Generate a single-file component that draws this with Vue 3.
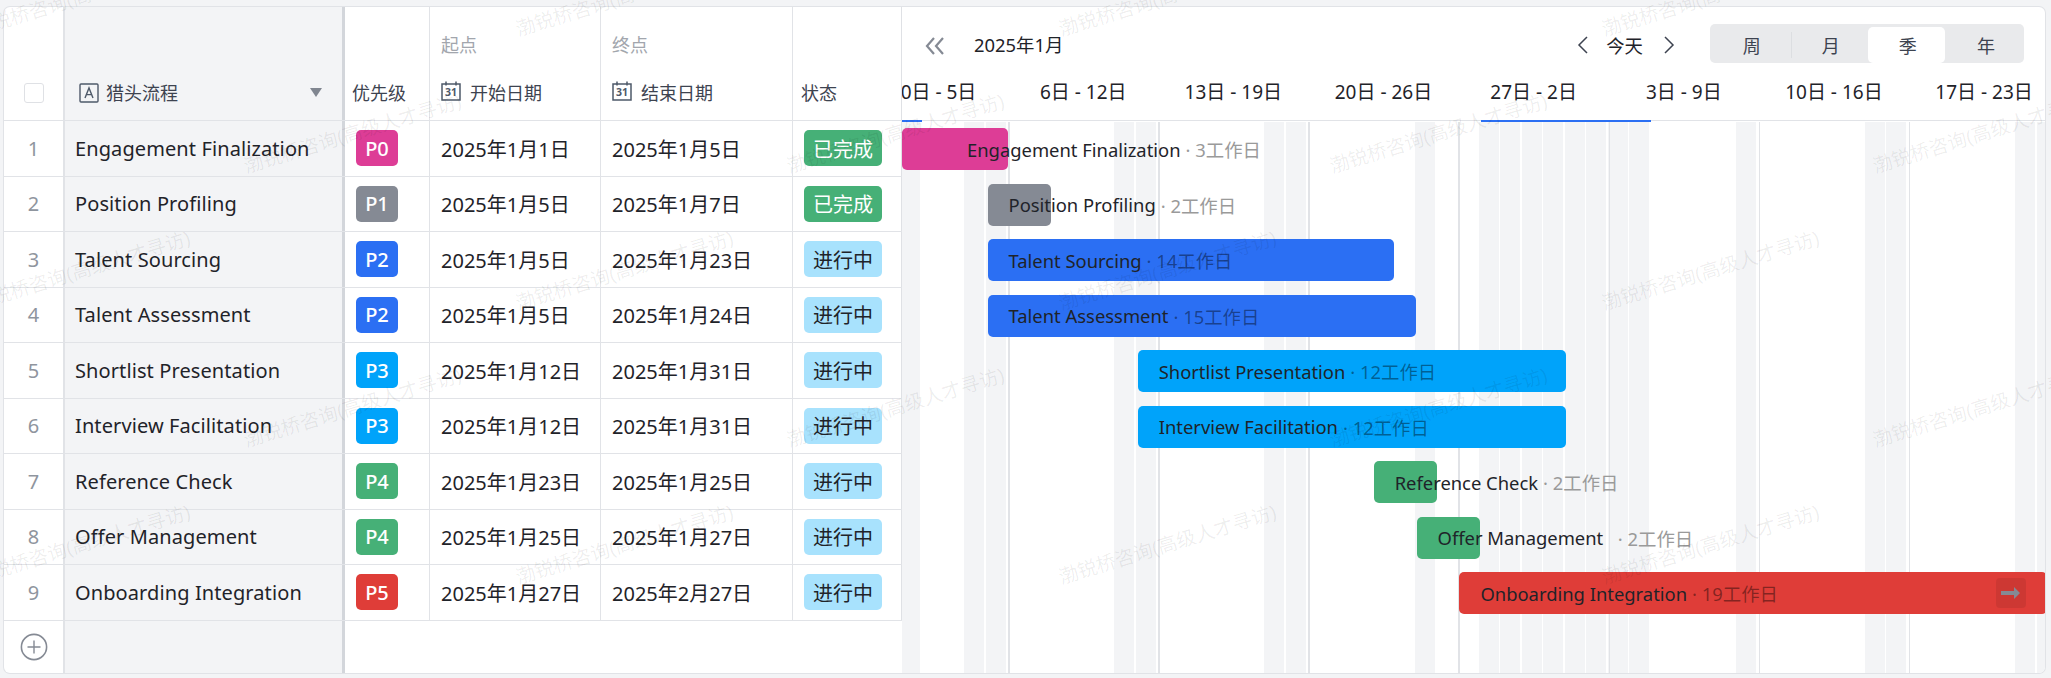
<template>
  <div class="page">
    <div class="card">
      <div class="table">
        <div class="row head">
          <div class="c seq"><span class="check"></span></div>
          <div class="c name">
            <svg class="ico" width="20" height="20" viewBox="0 0 20 20"><rect x="1" y="1" width="18" height="18" rx="1" fill="none" stroke="#4e5969" stroke-width="1.4"/><path d="M6 15l4-10 4 10M7.4 11.6h5.2" fill="none" stroke="#4e5969" stroke-width="1.4"/></svg>
            <span>猎头流程</span>
            <i class="tri"></i>
          </div>
          <div class="c pri">优先级</div>
          <div class="c start">
            <span class="over">起点</span>
            <span class="lab"><svg class="ico" width="20" height="20" viewBox="0 0 20 20"><path d="M1 3h18v16H1zM5 0.5v4M15 0.5v4" fill="none" stroke="#4e5969" stroke-width="1.5"/><text x="10" y="15.2" text-anchor="middle" font-size="10.5" font-weight="700" fill="#4e5969">31</text></svg>开始日期</span>
          </div>
          <div class="c end">
            <span class="over">终点</span>
            <span class="lab"><svg class="ico" width="20" height="20" viewBox="0 0 20 20"><path d="M1 3h18v16H1zM5 0.5v4M15 0.5v4" fill="none" stroke="#4e5969" stroke-width="1.5"/><text x="10" y="15.2" text-anchor="middle" font-size="10.5" font-weight="700" fill="#4e5969">31</text></svg>结束日期</span>
          </div>
          <div class="c status">状态</div>
        </div>
        <div v-for="(t, i) in tasks" :key="t.name" class="row body">
          <div class="c seq num">{{ i + 1 }}</div>
          <div class="c name">{{ t.name }}</div>
          <div class="c pri"><span class="badge" :class="t.pri.toLowerCase()">{{ t.pri }}</span></div>
          <div class="c start">{{ t.from }}</div>
          <div class="c end">{{ t.to }}</div>
          <div class="c status"><span class="state" :class="{ done: t.state === '已完成' }">{{ t.state }}</span></div>
        </div>
        <div class="row foot">
          <div class="c seq">
            <svg width="28" height="28" viewBox="0 0 28 28"><circle cx="14" cy="14" r="12.6" fill="none" stroke="#858a94" stroke-width="1.6"/><path d="M14 7.5v13M7.5 14h13" stroke="#858a94" stroke-width="1.4"/></svg>
          </div>
          <div class="c name"></div>
        </div>
      </div>

      <div class="gantt">
        <div class="g-head">
          <div class="tools">
            <svg class="dbl" width="20" height="18" viewBox="0 0 20 18"><path d="M9 1L2 9l7 8M18 1l-7 8 7 8" fill="none" stroke="#858a94" stroke-width="2.2"/></svg>
            <span class="month">2025年1月</span>
            <svg class="prev" width="12" height="20" viewBox="0 0 12 20"><path d="M10 2L2 10l8 8" fill="none" stroke="#3d4350" stroke-width="1.5"/></svg>
            <span class="today">今天</span>
            <svg class="next" width="12" height="20" viewBox="0 0 12 20"><path d="M2 2l8 8-8 8" fill="none" stroke="#3d4350" stroke-width="1.5"/></svg>
            <div class="seg">
              <span v-for="s in scales" :key="s" :class="{ on: s === '季' }">{{ s }}</span>
            </div>
          </div>
          <div class="weeks">
            <span v-for="w in weeks" :key="w">{{ w }}</span>
          </div>
          <i class="mark" :style="{ left: '0px', width: '20px' }"></i>
          <i class="mark" :style="{ left: '579px', width: '170px' }"></i>
        </div>
        <div class="g-body">
          <i v-for="d in offDays" :key="d" class="stripe" :style="{ left: dayX(d) - 1 + 'px' }"></i>
          <i v-for="n in 7" :key="n" class="line" :style="{ left: dayX(6 + (n - 1) * 7) + 'px' }"></i>
          <div v-for="t in tasks" :key="t.name" class="g-row">
            <div class="bar" :class="t.pri.toLowerCase()" :style="barStyle(t)">
              <span class="b-name">{{ t.name }}</span>
              <span class="b-days">{{ t.gap ? '&nbsp;' : '' }} · {{ t.days }}工作日</span>
              <span v-if="t.more" class="more">
                <svg width="20" height="14" viewBox="0 0 20 14"><path d="M0 5h13V1l6 6-6 6V9H0z" fill="#858a94"/></svg>
              </span>
            </div>
          </div>
        </div>
      </div>

      <span v-for="(m, i) in marks" :key="i" class="wm" :style="{ left: m.x + 'px', top: m.y + 'px' }">渤锐桥咨询(高级人才寻访)</span>
    </div>
  </div>
</template>

<script setup>
const scales = ['周', '月', '季', '年']
const weeks = ['30日 - 5日', '6日 - 12日', '13日 - 19日', '20日 - 26日', '27日 - 2日', '3日 - 9日', '10日 - 16日', '17日 - 23日']
const tasks = [
  { name: 'Engagement Finalization', pri: 'P0', from: '2025年1月1日', to: '2025年1月5日', state: '已完成', s: 1, e: 5, days: 3, pad: 65 },
  { name: 'Position Profiling', pri: 'P1', from: '2025年1月5日', to: '2025年1月7日', state: '已完成', s: 5, e: 7, days: 2 },
  { name: 'Talent Sourcing', pri: 'P2', from: '2025年1月5日', to: '2025年1月23日', state: '进行中', s: 5, e: 23, days: 14 },
  { name: 'Talent Assessment', pri: 'P2', from: '2025年1月5日', to: '2025年1月24日', state: '进行中', s: 5, e: 24, days: 15 },
  { name: 'Shortlist Presentation', pri: 'P3', from: '2025年1月12日', to: '2025年1月31日', state: '进行中', s: 12, e: 31, days: 12 },
  { name: 'Interview Facilitation', pri: 'P3', from: '2025年1月12日', to: '2025年1月31日', state: '进行中', s: 12, e: 31, days: 12 },
  { name: 'Reference Check', pri: 'P4', from: '2025年1月23日', to: '2025年1月25日', state: '进行中', s: 23, e: 25, days: 2 },
  { name: 'Offer Management', pri: 'P4', from: '2025年1月25日', to: '2025年1月27日', state: '进行中', s: 25, e: 27, days: 2, gap: true },
  { name: 'Onboarding Integration', pri: 'P5', from: '2025年1月27日', to: '2025年2月27日', state: '进行中', s: 27, e: 58, days: 19, more: true }
]
// days counted from Jan 1; Feb n = 31 + n
const offDays = [1, 4, 5, 11, 12, 18, 19, 25, 28, 29, 30, 31, 32, 33, 34, 35, 40, 46, 47, 53, 54]
const DAY = 21.45
const dayX = (n) => 106 + (n - 6) * DAY

function barStyle(t) {
  const left = t.s === 1 ? 0 : dayX(t.s) + 1
  const right = Math.min(dayX(t.e + 1), 1145)
  return {
    marginLeft: left + 'px',
    width: right - left + 'px',
    paddingLeft: (t.pad || 21) + 'px'
  }
}

// watermark tile: 543 x 137, every other row shifted
const marks = []
for (let r = 0; r < 5; r++) {
  for (let n = 0; n < 5; n++) {
    marks.push({ x: (r % 2 ? 244 : -27) + n * 543, y: 8 + r * 137 })
  }
}
</script>

<style>
html, body { background: #f3f4f6; }
</style>
<style scoped>
.page { box-sizing: border-box; height: 678px; padding: 7px 6px 5px 4px; overflow: hidden; position: relative; font-family: "Noto Sans", "Noto Sans CJK SC", sans-serif; color: #1f2329; }
.card { position: relative; box-sizing: border-box; height: 666px; display: flex; background: #fff; border-radius: 6px; box-shadow: 0 0 0 1px #e1e3e7; }
.table { width: 898px; flex: none; display: flex; flex-direction: column; }
.row { display: flex; flex: none; }
.head { height: 114px; border-bottom: 1.5px solid #e1e3e7; box-sizing: border-box; font-size: 18px; color: #3d4350; }
.body { height: 55.5px; box-sizing: border-box; border-bottom: 1.5px solid #e1e3e7; font-size: 20px; }
.body .name { letter-spacing: 0.1px; }
.foot { flex: 1; }
.c { box-sizing: border-box; display: flex; align-items: center; border-right: 1.5px solid #e1e3e7; }
.seq { width: 60px; justify-content: center; }
.name { width: 281px; padding-left: 10px; background: #f3f4f6; border-right: 3px solid #d3d6db; border-left: 1.5px solid #e1e3e7; }
.pri { width: 85px; padding-left: 11px; }
.start { width: 171px; padding-left: 11px; }
.end { width: 192px; padding-left: 11px; }
.status { width: 109px; padding-left: 11px; border-right: 1.5px solid #dfe1e5; }
.head .c { align-items: flex-end; padding-bottom: 15px; }
.head .pri { padding-left: 7px; }
.head .status { padding-left: 8px; }
.head .start, .head .end { flex-direction: column; align-items: flex-start; justify-content: flex-end; }
.over { color: #a2a6ad; margin-bottom: 22px; }
.lab { display: flex; align-items: center; gap: 9px; }
.ico { flex: none; margin-bottom: 2px; }
.head .name { gap: 7px; padding-left: 14px; }
.tri { margin-left: auto; margin-right: 20px; margin-bottom: 8px; border-left: 6px solid transparent; border-right: 6px solid transparent; border-top: 9px solid #808690; }
.check { width: 20px; height: 20px; box-sizing: border-box; border: 1.5px solid #dfe1e5; border-radius: 3px; margin-bottom: 2px; }
.num { color: #8f959e; font-size: 20px; }
.badge { width: 42px; height: 36px; border-radius: 5px; color: #fff; font-size: 20px; font-weight: 500; display: flex; align-items: center; justify-content: center; }
.p0 { background: #dd3d96; }
.p1 { background: #858a94; }
.p2 { background: #2b6ff3; }
.p3 { background: #00a3fa; }
.p4 { background: #46b077; }
.p5 { background: #df3d38; }
.state { width: 78px; height: 36px; border-radius: 5px; background: #a8e2fd; font-size: 20px; display: flex; align-items: center; justify-content: center; }
.state.done { background: #46b077; color: #fff; }

.gantt { flex: 1; min-width: 0; display: flex; flex-direction: column; overflow: hidden; border-radius: 0 6px 6px 0; }
.g-head { position: relative; height: 114px; flex: none; box-sizing: border-box; border-bottom: 1.5px solid #e1e3e7; }
.tools { height: 68px; display: flex; align-items: center; padding-top: 6px; box-sizing: border-box; font-size: 18.4px; }
.dbl { margin-left: 23px; margin-top: 3px; }
.month { margin-left: 29px; }
.prev { margin-left: auto; margin-top: 1px; }
.today { margin: 1px 21px 0 17px; }
.next { margin-top: 1px; margin-left: -1px; }
.seg { margin-left: 35px; margin-right: 21px; margin-top: -2px; width: 314px; flex: none; height: 39px; background: #e9eaec; border-radius: 5px; display: grid; grid-template-columns: repeat(3, 78.5px) 75px; padding: 3px 0 3px 3px; box-sizing: border-box; }
.seg span { display: flex; align-items: center; justify-content: center; border-radius: 5px; font-size: 18px; color: #3d4350; }
.seg span:first-child { border-radius: 0; border-right: 1px solid #dcdee1; margin: 5px 0; }
.seg .on { background: #fff; margin: 0 4px 0 -2px; padding-left: 3px; }
.weeks { display: flex; margin-left: -44px; margin-top: 2px; font-size: 19px; color: #1f2329; white-space: nowrap; }
.weeks span { width: 150.15px; flex: none; text-align: center; }
.mark { position: absolute; bottom: -1.5px; height: 2px; background: #2b6ff3; }
.g-body { position: relative; flex: 1; padding-top: 7px; overflow: hidden; }
.stripe { position: absolute; top: 1px; bottom: 0; width: 20px; background: #f3f4f6; }
.line { position: absolute; top: 1px; bottom: 0; width: 1.5px; background: #e1e3e7; }
.g-row { position: relative; height: 55.5px; }
.bar { box-sizing: border-box; height: 42px; border-radius: 5px; display: flex; align-items: center; white-space: nowrap; font-size: 18.4px; }
.b-days { color: #9a9a9a; margin-left: 5px; }
.p5 .b-days, .p2 .b-days, .p3 .b-days { color: rgba(0, 0, 0, 0.42); }
.more { position: absolute; right: 19px; width: 30px; height: 30px; border-radius: 4px; background: rgba(0, 0, 0, 0.08); display: flex; align-items: center; justify-content: center; }
.wm { position: absolute; pointer-events: none; white-space: nowrap; font-size: 19.5px; line-height: 27px; color: rgba(0, 0, 0, 0.07); transform: rotate(-17deg); transform-origin: 0 100%; }
</style>
